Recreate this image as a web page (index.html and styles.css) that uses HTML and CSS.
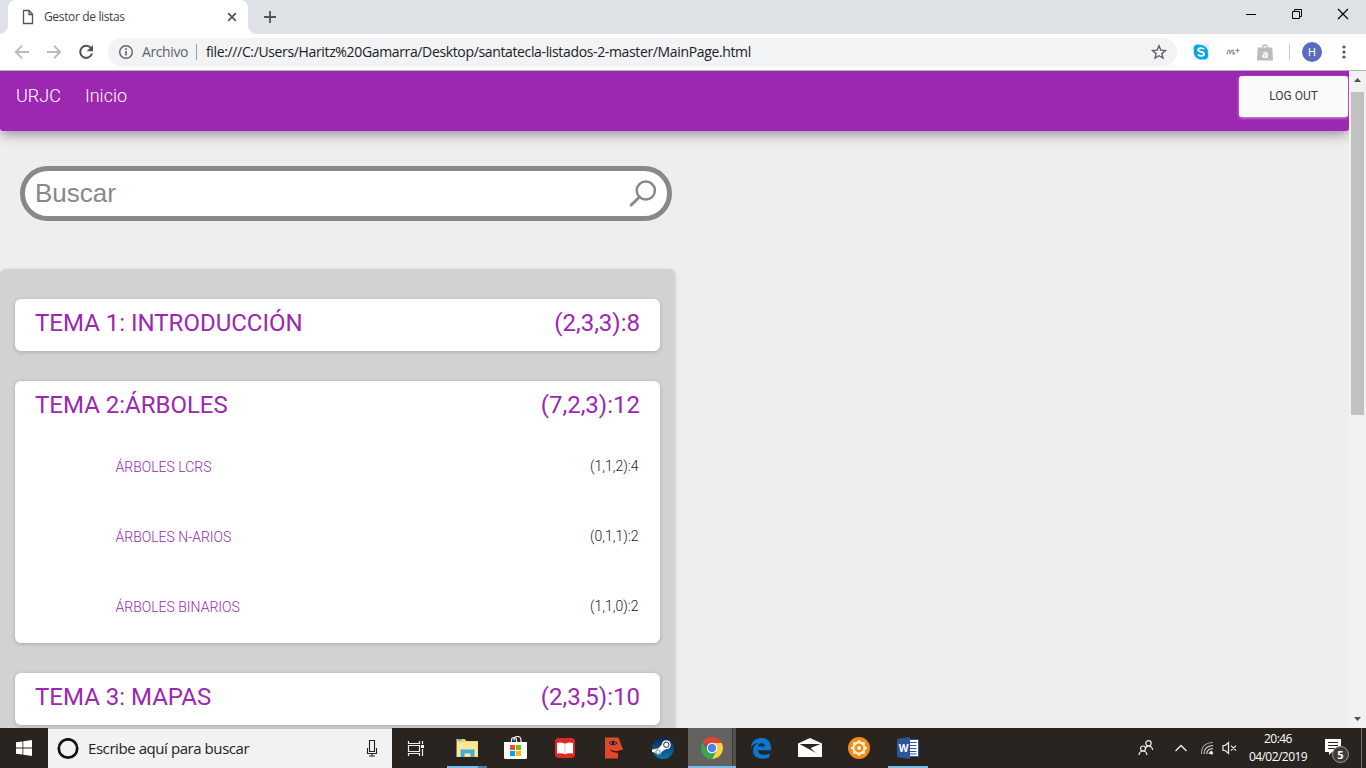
FILE: index.html
```html
<!DOCTYPE html>
<html lang="es">
<head>
<meta charset="utf-8">
<title>Gestor de listas</title>
<link rel="stylesheet" href="styles.css">
</head>
<body>
<div class="desktop">
  <div class="tabstrip">
    <div class="tab">
      <svg class="tab-page" width="12" height="16" viewBox="0 0 12 16"><path d="M1.5 1.500h5.500l3.500 3.500v9.500H1.500z M7 1.500V5.500h3.500" fill="none" stroke="#505357" stroke-width="1.300"/></svg>
      <span class="tab-title">Gestor de listas</span>
      <svg class="tab-close" width="10" height="10" viewBox="0 0 10 10"><path d="M1.200 1.200l7.600 7.600M8.800 1.200L1.200 8.800" stroke="#505357" stroke-width="1.700"/></svg>
    </div>
    <svg class="tab-new" width="12" height="12" viewBox="0 0 12 12"><path d="M6 0v12M0 6h12" stroke="#505357" stroke-width="1.800"/></svg>
    <div class="window-controls">
      <svg width="12" height="12" viewBox="0 0 12 12"><path d="M1 6.500h10" stroke="#000"/></svg>
      <svg width="12" height="12" viewBox="0 0 12 12"><path d="M1.500 3.500h7v7h-7zM3.500 3.500v-2h7v7h-2" fill="none" stroke="#000"/></svg>
      <svg width="12" height="12" viewBox="0 0 12 12"><path d="M1 1l10 10M11 1L1 11" stroke="#000" stroke-width="1.200"/></svg>
    </div>
  </div>

  <div class="toolbar">
    <div class="nav-buttons">
      <svg width="16" height="16" viewBox="0 0 16 16"><path d="M15 8H2M8 1.600L1.800 8 8 14.400" fill="none" stroke="#b9bbbe" stroke-width="1.900"/></svg>
      <svg width="16" height="16" viewBox="0 0 16 16"><path d="M1 8h13M8 1.600L14.200 8 8 14.400" fill="none" stroke="#b9bbbe" stroke-width="1.900"/></svg>
      <svg width="16" height="16" viewBox="0 0 16 16"><path d="M13 4.200A6 6 0 1 0 14 9.500" fill="none" stroke="#505357" stroke-width="2"/><path d="M15 1v6.300H8.700z" fill="#505357"/></svg>
    </div>
    <div class="omnibox">
      <svg width="16" height="16" viewBox="0 0 16 16"><circle cx="8" cy="8" r="6.300" fill="none" stroke="#5f6368" stroke-width="1.400"/><path d="M8 7v4.400M8 4.200v1.700" stroke="#5f6368" stroke-width="1.600"/></svg>
      <span class="scheme">Archivo</span>
      <span class="divider"></span>
      <span class="url">file:///C:/Users/Haritz%20Gamarra/Desktop/santatecla-listados-2-master/MainPage.html</span>
      <svg class="star" width="16" height="16" viewBox="0 0 16 16"><path d="M8 1.800l1.800 4.300 4.700.4-3.600 3.100 1.100 4.500L8 11.700l-4 2.400 1.100-4.500L1.500 6.500l4.700-.4z" fill="none" stroke="#5f6368" stroke-width="1.400"/></svg>
    </div>
    <div class="extensions">
      <svg width="16" height="16" viewBox="0 0 16 16"><rect width="16" height="16" fill="#e9eef2"/><path d="M5 .5q2 0 3 .4a7 7 0 0 1 6.800 8.100Q15.800 12 14.500 14T10 15.200A7.200 7.200 0 0 1 1 7Q0 4 1.500 2T5 .5z" fill="#08a5e6"/><path d="M11 5.300C10 3.700 5.200 3.500 5.200 5.900c0 2.500 5.900 1.300 5.900 3.900 0 2.700-5 2.700-6.200.6" fill="none" stroke="#fff" stroke-width="1.900"/></svg>
      <svg width="16" height="16" viewBox="0 0 16 16"><path d="M2 10.500Q3 6 4 6t1 4Q6.500 6 7.500 6t.5 3.800q.8 1 2-1.300M10.500 6.500h4M12.500 4.500v4" fill="none" stroke="#8b8b8b" stroke-width="1.200"/></svg>
      <svg width="16" height="17" viewBox="0 0 16 17"><path d="M5.500 5V3.300Q5.500 1 8 1t2.500 2.300V5" fill="none" stroke="#bcbcbc" stroke-width="1.300"/><path d="M.7 3.500h14.600l.7 13H0z" fill="#bcbcbc"/><text class="bag-letter" x="8" y="13.500" text-anchor="middle">a</text></svg>
    </div>
    <span class="bar-divider"></span>
    <span class="avatar">H</span>
    <svg class="menu-dots" width="4" height="16" viewBox="0 0 4 16"><g fill="#505357"><circle cx="2" cy="3" r="1.600"/><circle cx="2" cy="8" r="1.600"/><circle cx="2" cy="13" r="1.600"/></g></svg>
  </div>

  <div class="viewport">
    <main class="page">
      <nav class="navbar">
        <div class="nav-links"><a>URJC</a><a>Inicio</a></div>
        <button class="logout">LOG OUT</button>
      </nav>
      <div class="search">
        <span>Buscar</span>
        <svg width="28" height="30" viewBox="0 0 28 30"><circle cx="16.800" cy="11.500" r="9.100" fill="none" stroke="#888" stroke-width="2.500"/><path d="M10.500 18L2.200 26" stroke="#888" stroke-width="3" stroke-linecap="round"/></svg>
      </div>
      <section class="panel">
        <article class="card"><h2><span>TEMA 1: INTRODUCCIÓN</span><span>(2,3,3):8</span></h2></article>
        <article class="card card-open">
          <h2><span>TEMA 2:ÁRBOLES</span><span>(7,2,3):12</span></h2>
          <ul>
            <li><a>ÁRBOLES LCRS</a><span>(1,1,2):4</span></li>
            <li><a>ÁRBOLES N-ARIOS</a><span>(0,1,1):2</span></li>
            <li><a>ÁRBOLES BINARIOS</a><span>(1,1,0):2</span></li>
          </ul>
        </article>
        <article class="card"><h2><span>TEMA 3: MAPAS</span><span>(2,3,5):10</span></h2></article>
      </section>
    </main>
    <div class="scrollbar">
      <svg width="17" height="17" viewBox="0 0 17 17"><path d="M5 11h7L8.500 7z" fill="#505050"/></svg>
      <span class="thumb"></span>
      <svg width="17" height="17" viewBox="0 0 17 17"><path d="M5 6h7l-3.500 4z" fill="#505050"/></svg>
    </div>
  </div>

  <footer class="taskbar">
    <div class="start"><svg width="16" height="16" viewBox="0 0 16 16"><path d="M0 2.300l6.500-.9v6.200H0zM7.300 1.300L16 0v7.600H7.300zM0 8.400h6.500v6.200L0 13.700zM7.300 8.400H16V16l-8.700-1.300z" fill="#fff"/></svg></div>
    <div class="cortana">
      <svg width="22" height="22" viewBox="0 0 22 22"><circle cx="11" cy="10.500" r="9.200" fill="none" stroke="#111" stroke-width="2.700"/></svg>
      <span>Escribe aquí para buscar</span>
      <svg class="mic" width="12" height="18" viewBox="0 0 12 18"><path d="M3.500.5h5v11h-5zM1.500 8v5.500h9V8M6 13.500v3M3 16h6" fill="none" stroke="#222" stroke-width="1.100"/></svg>
    </div>
    <div class="taskview"><svg width="18" height="17" viewBox="0 0 18 17"><path d="M1.500 1v2.500h11V1M1.500 5.500h11v6h-11zM1.500 16v-2.500h11V16M15.500 1v3M15.500 9v7" fill="none" stroke="#eee" stroke-width="1.200"/><path d="M14 5h3v3h-3z" fill="#fff"/></svg></div>
    <div class="apps">
      <div class="app running split"><svg width="24" height="24" viewBox="0 0 24 24"><path d="M1.500 3h8l2 2H23v16H1.500z" fill="#f8d36b"/><path d="M2 6h20.500v14.500H2z" fill="#fee797"/><path d="M3 3.800h4" stroke="#45b6e5" stroke-width="1.500"/><path d="M5.500 21v-7.500h14V21h-4v-3.500h-6V21z" fill="#3caee2"/></svg></div>
      <div class="app"><svg width="24" height="24" viewBox="0 0 24 24"><path d="M7.500 7V4.500q0-3 2.500-3t2.500 3V7M10 4.500q0-4 3.500-4t3.500 4V7" fill="none" stroke="#eee" stroke-width="1.200"/><path d="M0 6h23v15.500q0 1.500-1.500 1.500h-20Q0 23 0 21.500z" fill="#fff"/><path d="M6 9h5v5H6z" fill="#f25022"/><path d="M12 9h5v5h-5z" fill="#7fba00"/><path d="M6 15h5v5H6z" fill="#00a4ef"/><path d="M12 15h5v5h-5z" fill="#ffb900"/></svg></div>
      <div class="app"><svg width="22" height="22" viewBox="0 0 22 22"><rect x="1" y="1" width="20" height="20" rx="4" fill="#df2823"/><path d="M3 6q4-1.500 8 .8Q15 4.500 19 6v10.500q-5-.8-8 .8-3-1.600-8-.8z" fill="#fff"/><path d="M11 6.800v10" stroke="#d9a9a7" stroke-width=".8"/></svg></div>
      <div class="app"><svg width="22" height="24" viewBox="0 0 22 24"><path d="M2 1.500h13.500l4.500 12-5 2v7H2z" fill="#dd4929"/><path d="M6 7q4-3.500 8 0-4 3.500-8 0" fill="#a5a095" stroke="#2b1c18"/><circle cx="10" cy="7" r="1.700" fill="#222"/><path d="M7.500 14q5 3.500 11 .8" fill="none" stroke="#32130d" stroke-width="1.400"/></svg></div>
      <div class="app"><svg width="24" height="24" viewBox="0 0 24 24"><defs><linearGradient id="steam" x2="0" y2="1"><stop stop-color="#16204d"/><stop offset="1" stop-color="#0879ad"/></linearGradient></defs><circle cx="12" cy="12" r="11" fill="url(#steam)"/><path d="M1 13.500l6-1L11.500 8l4 4.500-5 3.500-.9 2-3 .8L4 16.800l-3-1z" fill="#fff"/><circle cx="15.300" cy="8.800" r="4.500" fill="#fff"/><circle cx="15.300" cy="8.800" r="2.700" fill="none" stroke="#172956" stroke-width="1"/><circle cx="7" cy="16" r="2.200" fill="none" stroke="#64809c"/></svg></div>
      <div class="app running active"><svg width="24" height="24" viewBox="0 0 24 24"><path d="M12 12L2.470 6.500A11 11 0 0 1 21.530 6.500z" fill="#e0453a"/><path d="M12 7h9.800A11 11 0 0 1 12 23l4.500-8.500z" fill="#fdd03f"/><path d="M2.470 6.500A11 11 0 0 0 12 23l4.500-8.500L12 12 7.500 14.500z" fill="#35a853"/><circle cx="12" cy="12" r="5.300" fill="#fff"/><circle cx="12" cy="12" r="4.200" fill="#4b83ee"/></svg></div>
      <div class="app"><svg width="22" height="22" viewBox="0 0 22 22"><path d="M1 10.500C1.500 4.500 5.500 1 11 1c7 0 10 4.500 10 9.800v2.400H8c.1 5 7.500 5.600 11.500 3v4.100C12.500 23.500 3 21.500 3 13.800c0-3.500 2-6.300 5.300-7.700C6 6 3 7.500 1 10.500zM8 9.500h7c0-4.500-6.500-4.500-7 0z" fill="#0878d7"/></svg></div>
      <div class="app"><svg width="24" height="20" viewBox="0 0 24 20"><path d="M0 5.500L12 0l12 5.500V19H0z" fill="#fff"/><path d="M1.500 6h21L12.500 10l5.500 5z" fill="#29241f"/></svg></div>
      <div class="app"><svg width="24" height="24" viewBox="0 0 24 24"><circle cx="12" cy="12" r="11" fill="#f58a14"/><circle cx="12" cy="12" r="5.600" fill="none" stroke="#fff2dd" stroke-width="2.300"/><circle cx="12" cy="12" r="2" fill="#fff2dd"/><path d="M12 4v3M12 17v3M4 12h3M17 12h3M6.300 6.300l2.500 2.500M15.200 15.200l2.500 2.500M17.700 6.300l-2.500 2.500M8.800 15.200l-2.500 2.500" stroke="#fff2dd" stroke-width="2"/></svg></div>
      <div class="app running"><svg width="24" height="24" viewBox="0 0 24 24"><path d="M12 3.500h10.500v17H12z" fill="#fff" stroke="#3159a3"/><path d="M13 6.500h7.500M13 9.500h7.500M13 12.500h7.500M13 15.500h7.500M13 18h7.500" stroke="#2d569d" stroke-width="1.200"/><path d="M1 3l13-2v22L1 21z" fill="#2b579a"/><text class="word-letter" x="7.500" y="16" text-anchor="middle">W</text></svg></div>
    </div>
    <div class="tray">
      <svg class="people" width="16" height="18" viewBox="0 0 16 18"><g fill="none" stroke="#eee" stroke-width="1.200"><circle cx="10.500" cy="4.300" r="2.700"/><path d="M7.500 10Q8 7 10.500 7q3.500 0 4.200 4"/><circle cx="5" cy="9.500" r="2.500"/><path d="M1 16q.5-4 4-4t4 4"/></g></svg>
      <svg class="chevron" width="12" height="8" viewBox="0 0 12 8"><path d="M.5 7L6 1.500 11.500 7" fill="none" stroke="#eee" stroke-width="1.300"/></svg>
      <svg class="wifi" width="14" height="14" viewBox="0 0 14 14"><g fill="none" stroke="#ddd" stroke-width="1.100"><path d="M1.500 13Q1 2 13 1.500" opacity=".7"/><path d="M4 13Q4 5 13 4.500"/><path d="M6.700 13Q6.700 8 13 7.500"/><path d="M9 13q.5-2.500 3.500-3"/></g><circle cx="11.500" cy="12" r="1.500" fill="#fff"/></svg>
      <svg class="sound" width="15" height="14" viewBox="0 0 15 14"><path d="M1 4.500h2.200L6.500 1.500v11l-3.300-3H1zM9 4.700l5 5M14 4.700l-5 5" fill="none" stroke="#eee" stroke-width="1.200"/></svg>
      <div class="clock"><span>20:46</span><span>04/02/2019</span></div>
      <div class="notices"><svg width="26" height="26" viewBox="0 0 26 26"><path d="M1 1h16v13H8l-3 3v-3H1z" fill="#fff"/><path d="M4 4.500h10M4 7.500h10M4 10.500h10" stroke="#29241f"/><circle cx="16.500" cy="16.500" r="8" fill="#403c39" stroke="#9d9b99"/><text class="notice-count" x="16.500" y="20.700" text-anchor="middle">5</text></svg></div>
      <span class="peek"></span>
    </div>
  </footer>
</div>
</body>
</html>
```
FILE: styles.css
```css
* { box-sizing: border-box; }
body { margin: 0; font-family: Roboto, "Open Sans", sans-serif; overflow: hidden; }
svg { display: block; flex: none; }
h2, ul { margin: 0; padding: 0; }
.desktop { width: 1366px; height: 768px; display: flex; flex-direction: column; overflow: hidden; }

.tabstrip { height: 34px; flex: none; display: flex; align-items: center; background: #dee1e6; }
.tab { position: relative; width: 240px; height: 34px; margin-left: 8px; padding: 0 11px 0 14px; display: flex; align-items: center; background: #fff; border-radius: 8px 8px 0 0; font: 12px "Open Sans", sans-serif; color: #3c4043; }
.tab::before, .tab::after { content: ""; position: absolute; bottom: 0; width: 8px; height: 8px; }
.tab::before { left: -8px; background: radial-gradient(circle at 0 0, transparent 7.5px, #fff 8px); }
.tab::after { right: -8px; background: radial-gradient(circle at 100% 0, transparent 7.5px, #fff 8px); }
.tab-title { margin-left: 10px; letter-spacing: -0.35px; margin-top: -1px; white-space: nowrap; }
.tab-close { margin-left: auto; }
.tab-new { margin-left: 16px; }
.window-controls { margin: -6px 17px 0 auto; display: flex; gap: 34px; }

.toolbar { height: 37px; flex: none; display: flex; align-items: center; background: #fff; border-bottom: 1px solid #b6b4b6; }
.nav-buttons { display: flex; gap: 16px; margin-left: 14px; }
.omnibox { width: 1069px; height: 28px; margin-left: 14px; padding: 0 10px; display: flex; align-items: center; background: #f1f3f4; border-radius: 14px; font: 14px "Open Sans", sans-serif; color: #202124; white-space: nowrap; }
.scheme { width: 47px; margin: -1px 0 0 8px; color: #5f6368; letter-spacing: -0.4px; }
.divider { width: 1px; height: 16px; margin: 0 9px 0 7px; background: #9aa0a6; }
.url { letter-spacing: -0.355px; margin-top: -1px; }
.star { margin-left: auto; }
.extensions { display: flex; align-items: center; gap: 16px; margin-left: 16px; }
.bag-letter { font: bold 11px "Open Sans", sans-serif; fill: #fff; }
.bar-divider { width: 1px; height: 16px; margin-left: 16px; background: #c6c8ca; }
.avatar { width: 20px; height: 20px; margin-left: 12px; border-radius: 50%; background: #5c6bc0; color: #fff; font: 11px/21px Roboto, sans-serif; text-align: center; }
.menu-dots { margin-left: 20px; }

.viewport { flex: 1; min-height: 0; display: flex; overflow: hidden; }
.page { width: 1349px; background: #eee; overflow: hidden; }
.navbar { height: 60px; padding: 5px 1px 0 16px; display: flex; align-items: flex-start; justify-content: space-between; background: #9c27b0; border-radius: 0 0 3px 3px; box-shadow: 0 4px 12px -2px rgba(90,40,100,.5), 0 4px 15px rgba(0,0,0,.1); }
.nav-links { display: flex; gap: 24px; padding-top: 8px; color: #fff; font-size: 18px; line-height: 24px; font-weight: 300; }
.logout { width: 109px; height: 41px; padding: 0 0 1px; border: 0; border-radius: 3px; background: #fafafa; color: #3c3c3c; font: 12px Roboto, sans-serif; box-shadow: 0 1px 3px rgba(255,255,255,.55); }
.search { width: 652px; height: 55px; margin: 35px 0 0 20px; padding: 0 10px; display: flex; align-items: center; justify-content: space-between; border: 5px solid #888; border-radius: 28px; background: #fff; color: #888; font: 26px "Liberation Sans", Arial, sans-serif; }
.panel { width: 675px; height: 560px; margin-top: 48px; padding: 30px 15px 0; display: flex; flex-direction: column; gap: 30px; background: #d2d2d2; border-radius: 6px; box-shadow: 0 1px 4px rgba(0,0,0,.14); }
.card { width: 645px; height: 52px; flex: none; padding: 8px 20px 0; background: #fff; border-radius: 6px; box-shadow: 0 1px 4px rgba(0,0,0,.2); }
.card-open { height: 262px; }
.card h2 { display: flex; justify-content: space-between; color: #9c27b0; font-size: 24px; line-height: 32px; font-weight: 400; }
.card ul { list-style: none; margin-top: 10px; padding: 0 1.500px 0 80.500px; }
.card li { display: flex; align-items: center; justify-content: space-between; height: 70px; font-size: 14px; font-weight: 300; color: #222; }
.card li a { color: #9c27b0; padding-top: 1px; }
.scrollbar { width: 17px; display: flex; flex-direction: column; background: #f1f1f1; }
.thumb { width: 13px; height: 323px; margin: 4px 2px auto; background: #c1c1c1; }

.taskbar { height: 40px; flex: none; display: flex; background: #29241f; color: #fff; }
.start { width: 48px; display: grid; place-items: center; }
.cortana { width: 344px; padding: 0 14px 0 9px; display: flex; align-items: center; background: #f2f2f2; border-top: 1px solid #c4c4c4; color: #222; font: 15px "Open Sans", sans-serif; white-space: nowrap; }
.cortana span { margin: -2px 0 0 9px; letter-spacing: -0.43px; }
.mic { margin-left: auto; }
.taskview { width: 51px; padding-right: 3px; display: grid; place-items: center; }
.apps { display: flex; gap: 1px; }
.app { width: 48px; height: 40px; display: grid; place-items: center; }
.running { background: linear-gradient(#76b9ed, #76b9ed) center bottom / 40px 2px no-repeat; }
.split { background: linear-gradient(90deg, #76b9ed 31px, #547d9d 31px) center bottom / 40px 2px no-repeat; }
.active { background: linear-gradient(#76b9ed, #76b9ed) left bottom / 48px 2px no-repeat, linear-gradient(90deg, #64615e 44px, #3c3835 44px, #3c3835 45px, #54514e 45px); }
.word-letter { font: bold 10px "Open Sans", sans-serif; fill: #fff; }
.tray { flex: 1; display: flex; align-items: center; justify-content: flex-end; font: 12px "Open Sans", sans-serif; }
.people { margin-right: 1px; }
.chevron { margin-left: 20px; }
.wifi { margin-left: 13px; }
.sound { margin-left: 8px; }
.clock { width: 62px; margin-left: 10px; display: flex; flex-direction: column; align-items: center; line-height: 18px; letter-spacing: -0.55px; }
.notices { margin: 5px 11px 0 15px; }
.notice-count { font: bold 11px "Open Sans", sans-serif; fill: #fff; }
.peek { width: 5px; height: 40px; border-left: 1px solid #77736f; }
```
